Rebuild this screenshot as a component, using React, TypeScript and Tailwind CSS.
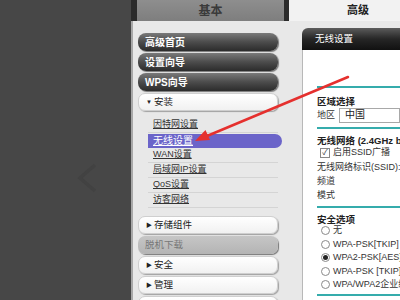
import React from "react";

const font = "font-['Liberation_Sans','Noto_Sans_CJK_SC',sans-serif]";

function DarkBtn({ label }: { label: string }) {
  return (
    <div className="h-[18px] w-[140px] shrink-0 rounded-[8px] bg-gradient-to-b from-[#7a7a7a] via-[#4c4c4c] to-[#2c2c2c] shadow-[1px_1px_1px_#777] flex items-center pl-[7px] text-[10px] font-bold text-white">
      {label}
    </div>
  );
}

function LightBtn({ label, open }: { label: string; open?: boolean }) {
  return (
    <div className="h-[18px] w-[140px] shrink-0 rounded-[7px] border border-[#cfcfcf] bg-gradient-to-b from-white to-[#f1f1f1] shadow-[1px_1px_1px_#a0a0a0] flex items-center pl-[7px] text-[9.5px] text-[#222]">
      {label && <span className="text-[6px] mr-[2px]">{open ? "▼" : "▶"}</span>}
      {label}
    </div>
  );
}

const subs = ["因特网设置", "无线设置", "WAN设置", "局域网IP设置", "QoS设置", "访客网络"];

function Radio({ label, on }: { label: string; on?: boolean }) {
  return (
    <div className="h-[13.5px] flex items-center gap-[3px] pl-[4px]">
      <span className="w-[9px] h-[9px] shrink-0 rounded-full border border-[#8a8a8a] bg-white flex items-center justify-center">
        {on && <span className="w-[5px] h-[5px] rounded-full bg-[#222]" />}
      </span>
      <span className="whitespace-nowrap">{label}</span>
    </div>
  );
}

export default function App() {
  return (
    <div className={`relative w-[400px] h-[300px] overflow-hidden flex bg-[#474747] ${font}`}>
      {/* dark left margin with faint chevron */}
      <div className="w-[131px] shrink-0 pt-[163px] pl-[75px]">
        <svg width="24" height="30" viewBox="0 0 24 30">
          <polyline points="20,2 5,15 20,28" fill="none" stroke="#424242" strokeWidth="3.5" />
        </svg>
      </div>

      <div className="flex-1 min-w-0 overflow-hidden flex flex-col bg-[#e8e8e8]">
        {/* tabs */}
        <div className="h-[21px] flex shrink-0">
          <div className="w-[158px] shrink-0 border-l-[6px] border-r-[5px] border-[#2b2b2b] bg-gradient-to-b from-[#8e8e8e] to-[#7e7e7e] flex items-center justify-center text-[12px] font-bold text-[#3a3a3a]">
            基本
          </div>
          <div className="flex-1 min-w-0 bg-[#f2f2f2] flex items-center justify-center pl-[27px] text-[11px] font-bold text-[#222]">
            高级
          </div>
        </div>

        <div className="flex flex-1 min-h-0 border-l-[2px] border-[#a8a8a8]">
          {/* sidebar */}
          <div className="w-[169px] shrink-0 pl-[5px] pt-[12px] flex flex-col gap-[2px]">
            <DarkBtn label="高级首页" />
            <DarkBtn label="设置向导" />
            <DarkBtn label="WPS向导" />
            <LightBtn label="安装" open />
            <div className="ml-[10px] pt-[5px] pb-[6px] flex flex-col shrink-0">
              {subs.map((s) =>
                s === "无线设置" ? (
                  <div key={s} className="h-[15px] w-[134px] flex items-center">
                    <div className="h-[14px] w-full rounded-r-full bg-[#6b64c9] flex items-center pl-[5px] text-[10px] text-white underline">
                      {s}
                    </div>
                  </div>
                ) : (
                  <div key={s} className="h-[15px] w-[130px] border-b border-[#d4d4d4] flex items-center pl-[5px] text-[9px] text-[#333] underline">
                    {s}
                  </div>
                )
              )}
            </div>
            <LightBtn label="存储组件" />
            <div className="h-[18px] w-[140px] shrink-0 rounded-[7px] bg-gradient-to-b from-[#c6c6c6] to-[#b4b4b4] shadow-[1px_1px_1px_#777] flex items-center pl-[7px] text-[9.5px] text-[#777]">
              脱机下载
            </div>
            <LightBtn label="安全" />
            <LightBtn label="管理" />
            <LightBtn label="" />
          </div>

          {/* panel */}
          <div className="flex-1 min-w-0 overflow-hidden pt-[7px] flex flex-col">
            <div className="h-[22px] shrink-0 rounded-tl-[6px] bg-gradient-to-b from-[#5c5c5c] via-[#262626] to-[#111] flex items-center pl-[13px] text-[9.5px] text-white">
              无线设置
            </div>
            <div className="flex-1 bg-white border-l border-[#b8b8b8] pl-[14px] text-[9px] text-[#333] leading-none">
              <div className="h-[2px] bg-[#35acac] mt-[36px]" />
              <div className="h-[18px] flex items-end font-bold text-[9.5px] text-[#222]">区域选择</div>
              <div className="h-[18px] flex items-center">
                <span className="w-[22px] shrink-0">地区</span>
                <div className="flex-1 h-[15px] border border-[#a8a8a8] flex items-center pl-[5px] text-[10px] text-[#222]">中国</div>
              </div>
              <div className="h-[2px] bg-[#35acac] mt-[3px]" />
              <div className="h-[16px] flex items-end font-bold text-[9.5px] text-[#222] whitespace-nowrap">无线网络 (2.4GHz b/g/n)</div>
              <div className="h-[15px] flex items-center gap-[3px] pl-[3px] whitespace-nowrap">
                <span className="w-[10px] h-[10px] shrink-0 border border-[#888] bg-white flex items-center justify-center text-[8px] text-[#333]">✓</span>
                启用SSID广播
              </div>
              <div className="h-[14px] flex items-center whitespace-nowrap">无线网络标识(SSID):</div>
              <div className="h-[15px] flex items-center">频道</div>
              <div className="h-[13px] flex items-center">模式</div>
              <div className="h-[2px] bg-[#35acac] mt-[4px]" />
              <div className="h-[16px] flex items-end font-bold text-[9.5px] text-[#222]">安全选项</div>
              <Radio label="无" />
              <Radio label="WPA-PSK[TKIP]" />
              <Radio label="WPA2-PSK[AES]" on />
              <Radio label="WPA-PSK [TKIP] + WPA2-PSK [AES]" />
              <Radio label="WPA/WPA2企业级模式" />
              <div className="h-[2px] bg-[#35acac] mt-[2px]" />
            </div>
          </div>
        </div>
      </div>

      {/* red annotation arrow */}
      <svg className="absolute inset-0 pointer-events-none" width="400" height="300" viewBox="0 0 400 300">
        <line x1="348" y1="77" x2="207" y2="136" stroke="#e5302e" strokeWidth="2.5" strokeLinecap="round" />
        <polygon points="195,141 210,140 205.5,130" fill="#e5302e" />
      </svg>
    </div>
  );
}
